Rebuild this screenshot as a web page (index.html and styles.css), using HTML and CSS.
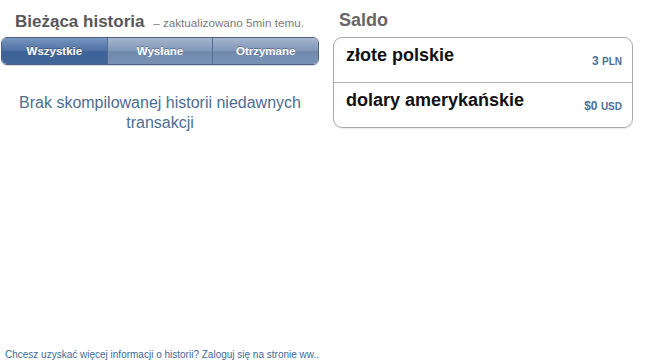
FILE: index.html
```html
<!DOCTYPE html>
<html lang="pl">
<head>
<meta charset="utf-8">
<title>Historia</title>
<link rel="stylesheet" href="styles.css">
</head>
<body>
<div class="page">
  <div class="columns">
    <section class="history">
      <h2 class="history-head"><span class="title">Bieżąca historia</span> <span class="updated">– zaktualizowano 5min temu.</span></h2>
      <div class="segmented">
        <div class="seg selected">Wszystkie</div>
        <div class="seg">Wysłane</div>
        <div class="seg">Otrzymane</div>
      </div>
      <p class="empty">Brak skompilowanej historii niedawnych transakcji</p>
    </section>
    <section class="balance">
      <h2 class="balance-head">Saldo</h2>
      <div class="balance-box">
        <div class="row">
          <span class="name">złote polskie</span>
          <span class="amount">3 <small>PLN</small></span>
        </div>
        <div class="row">
          <span class="name">dolary amerykańskie</span>
          <span class="amount">$0 <small>USD</small></span>
        </div>
      </div>
    </section>
  </div>
  <p class="footer">Chcesz uzyskać więcej informacji o historii? Zaloguj się na stronie ww..</p>
</div>
</body>
</html>
```
FILE: styles.css
```css
html, body {
  margin: 0;
  padding: 0;
  background: #ffffff;
}
body {
  font-family: "Liberation Sans", Arial, Helvetica, sans-serif;
}
.page {
  width: 646px;
  height: 363px;
  display: flex;
  flex-direction: column;
  overflow: hidden;
}
.columns {
  display: flex;
  gap: 13px;
}
.history {
  width: 320px;
}
.history-head {
  margin: 0;
  padding: 12px 0 0 15px;
  height: 37px;
  box-sizing: border-box;
  font-size: 17px;
  line-height: 20px;
  white-space: nowrap;
}
.history-head .title {
  font-size: 17px;
  font-weight: bold;
  color: #58585a;
}
.history-head .updated {
  font-size: 11.7px;
  font-weight: normal;
  color: #7a7a7a;
  margin-left: 4px;
}
.segmented {
  display: flex;
  height: 28px;
  margin-left: 1px;
  width: 318px;
  box-sizing: border-box;
  border: 1px solid #4b6283;
  border-radius: 6px;
  overflow: hidden;
  box-shadow: 0 1px 1px rgba(0,0,0,0.15);
}
.seg {
  flex: 1;
  display: flex;
  align-items: center;
  justify-content: center;
  font-size: 11.5px;
  font-weight: bold;
  color: #ffffff;
  text-shadow: 0 -1px 0 rgba(0,0,0,0.3);
  background: linear-gradient(#a5b5cd, #8097b9 50%, #7189ad 52%, #7891b4);
  border-left: 1px solid #566d92;
}
.seg:first-child {
  border-left: none;
}
.seg.selected {
  background: linear-gradient(#7a96c1, #4e70a3 50%, #3e6197 52%, #426699);
}
.empty {
  margin: 28px 0 0;
  text-align: center;
  font-size: 16px;
  line-height: 20px;
  color: #4c6d92;
  padding: 0 8px;
}
.balance {
  width: 300px;
}
.balance-head {
  margin: 0;
  padding: 10px 0 0 6px;
  height: 37px;
  box-sizing: border-box;
  font-size: 18px;
  line-height: 20px;
  font-weight: bold;
  color: #666666;
}
.balance-box {
  border: 1px solid #a9a9a9;
  border-radius: 9px;
  box-shadow: 0 1px 1px rgba(0,0,0,0.08);
}
.row {
  height: 44px;
  display: flex;
  justify-content: space-between;
  align-items: flex-start;
  padding: 0 10px 0 12px;
}
.row + .row {
  border-top: 1px solid #b3b3b3;
}
.name {
  margin-top: 6px;
  font-size: 18px;
  line-height: 22px;
  font-weight: bold;
  color: #111111;
}
.amount {
  margin-top: 16px;
  font-size: 12px;
  line-height: 14px;
  font-weight: bold;
  color: #4a6f98;
}
.amount small {
  font-size: 10px;
}
.footer {
  margin: auto 0 0 5px;
  padding-bottom: 2px;
  font-size: 10px;
  line-height: 12px;
  color: #3d6b9a;
}
```
